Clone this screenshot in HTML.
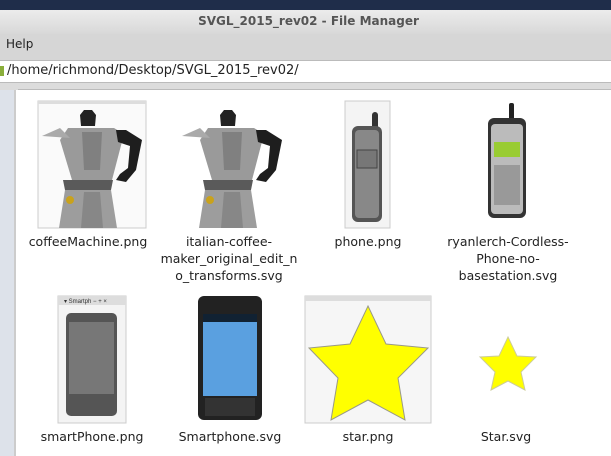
<!DOCTYPE html><html><head><style>
*{margin:0;padding:0;box-sizing:border-box}
body{width:611px;height:456px;overflow:hidden;background:#fff;font-family:"DejaVu Sans","Liberation Sans",sans-serif;position:relative}
.a{position:absolute}
.lbl{position:absolute;font-size:12.5px;color:#222;text-align:center;line-height:17px;width:140px}
</style></head><body>
<div class="a" style="left:0;top:0;width:611px;height:10px;background:#1f2d4a"></div>
<div class="a" style="left:0;top:10px;width:611px;height:24px;background:linear-gradient(#ececec,#d8d8d8)"></div>
<div class="a" style="left:0;top:14px;width:611px;text-align:center;font-size:12px;font-weight:bold;color:#555;padding-left:6px">SVGL_2015_rev02 - File Manager</div>
<div class="a" style="left:0;top:34px;width:611px;height:26px;background:#d6d6d6"></div>
<div class="a" style="left:6px;top:37px;font-size:12px;color:#222">Help</div>
<div class="a" style="left:0;top:60px;width:611px;height:23px;background:#fff;border-top:1px solid #bbb;border-bottom:1px solid #bbb"></div>
<div class="a" style="left:0;top:66px;width:4px;height:10px;background:#8aae3a"></div>
<div class="a" style="left:7px;top:63px;font-size:13px;color:#222">/home/richmond/Desktop/SVGL_2015_rev02/</div>
<div class="a" style="left:0;top:83px;width:611px;height:7px;background:#dcdcdc"></div>
<div class="a" style="left:0;top:90px;width:16px;height:366px;background:#dde2ea;border-right:2px solid #ccc"></div>
<div class="a" style="left:18px;top:89px;width:593px;height:1px;background:#bbb"></div>
<svg class="a" style="left:0;top:0" width="611" height="456">
<!-- coffee png -->
<rect x="38" y="101" width="108" height="127" fill="#fafafa" stroke="#ccc"/>
<rect x="38" y="101" width="108" height="3" fill="#ddd"/>
<g id="pot">
<path d="M80 115l4-5h8l4 5-1 11h-14z" fill="#222"/>
<path d="M68 128h46l10 6-12 46h-40l-12-40z" fill="#9a9a9a"/>
<path d="M42 136l18-8 10 10z" fill="#aaa"/>
<path d="M82 132h20l-2 38h-16z" fill="#808080"/>
<path d="M116 130h10l16 10-6 30-10 12-10-2 4-6 8-6 2-22-12-4z" fill="#1e1e1e"/>
<path d="M63 180h50l-2 10h-46z" fill="#5a5a5a"/>
<path d="M65 190h46l6 38h-58z" fill="#9d9d9d"/>
<path d="M84 192h16l3 36h-22z" fill="#878787"/>
<circle cx="70" cy="200" r="4" fill="#c9a21c"/>
</g>
<use href="#pot" x="140" y="0"/>
<!-- phones -->
<rect x="345" y="101" width="45" height="127" fill="#f4f4f4" stroke="#ccc"/>
<rect x="372" y="112" width="6" height="20" rx="3" fill="#333"/>
<rect x="352" y="126" width="30" height="96" rx="6" fill="#555"/>
<rect x="355" y="130" width="24" height="88" rx="4" fill="#888"/>
<rect x="357" y="150" width="20" height="18" fill="#777" stroke="#444"/>
<rect x="509" y="103" width="5" height="20" rx="2" fill="#222"/>
<rect x="488" y="118" width="38" height="100" rx="6" fill="#333"/>
<rect x="491" y="124" width="32" height="90" rx="4" fill="#bbb"/>
<rect x="494" y="142" width="26" height="15" fill="#9c3"/>
<rect x="494" y="165" width="26" height="40" fill="#999"/>
<!-- smartphones -->
<rect x="58" y="296" width="68" height="127" fill="#f4f4f4" stroke="#ccc"/>
<rect x="58" y="296" width="68" height="9" fill="#ddd"/>
<text x="64" y="303" font-size="6" fill="#333" font-family="Liberation Sans">▾ Smartph  − + ×</text>
<rect x="66" y="313" width="51" height="103" rx="5" fill="#555"/>
<rect x="69" y="322" width="45" height="72" fill="#777"/>
<rect x="198" y="296" width="64" height="124" rx="6" fill="#222"/>
<rect x="203" y="314" width="54" height="82" fill="#5aa0e0"/>
<rect x="203" y="314" width="54" height="8" fill="#123"/>
<rect x="205" y="398" width="50" height="18" fill="#333"/>
<!-- stars -->
<rect x="305" y="296" width="126" height="127" fill="#f6f6f6" stroke="#ccc"/>
<rect x="305" y="296" width="126" height="5" fill="#ddd"/>
<polygon points="368,306 386,344 428,348 398,378 405,420 368,400 331,420 338,378 309,348 350,344" fill="#ff0" stroke="#998"/>
<polygon points="508,337 517,356 536,357 521,372 525,390 508,381 491,390 495,372 480,357 499,356" fill="#ff0" stroke="#cc9"/>
</svg>
<div class="lbl" style="left:18px;top:233px">coffeeMachine.png</div>
<div class="lbl" style="left:159px;top:233px;width:140px">italian-coffee-<br>maker_original_edit_n<br>o_transforms.svg</div>
<div class="lbl" style="left:298px;top:233px">phone.png</div>
<div class="lbl" style="left:438px;top:233px">ryanlerch-Cordless-<br>Phone-no-<br>basestation.svg</div>
<div class="lbl" style="left:22px;top:428px">smartPhone.png</div>
<div class="lbl" style="left:160px;top:428px">Smartphone.svg</div>
<div class="lbl" style="left:298px;top:428px">star.png</div>
<div class="lbl" style="left:436px;top:428px">Star.svg</div>
</body></html>
